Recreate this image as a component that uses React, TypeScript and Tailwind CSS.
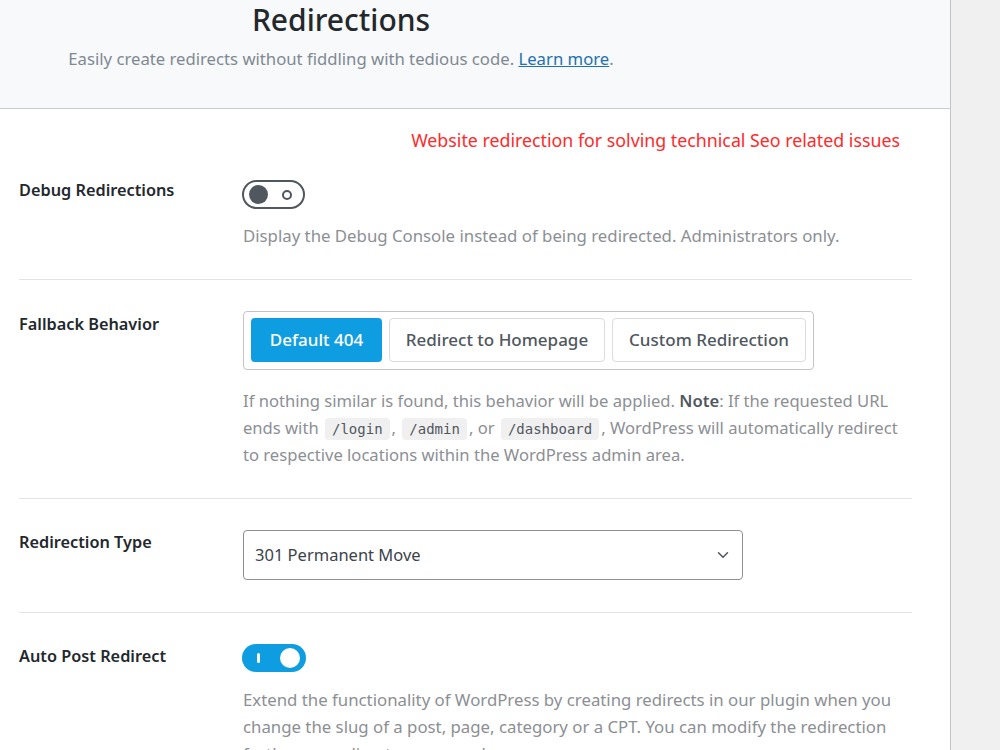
import { ChevronDown } from 'lucide-react';

function Toggle({ on }: { on: boolean }) {
  if (on) {
    return (
      <div className="-ml-[1px] flex h-[28px] w-[64px] items-center justify-between rounded-full bg-[#0f9de2] pl-[15px] pr-[6px]">
        <span className="h-[10px] w-[3px] rounded-sm bg-white" />
        <span className="h-[20px] w-[20px] rounded-full bg-white" />
      </div>
    );
  }
  return (
    <div className="-ml-[1px] flex h-[29px] w-[63px] items-center justify-between rounded-full border-2 border-[#50575e] pl-[5px] pr-[11px]">
      <span className="h-[19px] w-[19px] rounded-full bg-[#50575e]" />
      <span className="h-[10px] w-[10px] rounded-full border-2 border-[#50575e]" />
    </div>
  );
}

function Code({ children }: { children: string }) {
  return (
    <code className="mx-[2px] inline-block rounded-sm bg-[#f0f0f1] px-[7px] font-['DejaVu_Sans_Mono',monospace] text-[14px] leading-[22px] text-[#50575e]">
      {children}
    </code>
  );
}

function Row({ label, children, last, pt, pb }: { label: string; children: React.ReactNode; last?: boolean; pt?: string; pb?: string }) {
  return (
    <div className={`flex ${pt ?? 'pt-[32px]'} ${last ? '' : `border-b border-[#e2e4e7] ${pb ?? 'pb-[30px]'}`}`}>
      <div className="w-[224px] shrink-0 text-[16.3px] leading-6 font-semibold text-[#23282d]">{label}</div>
      <div className="flex-1">{children}</div>
    </div>
  );
}

export default function App() {
  const options = [
    { label: 'Default 404', w: 'w-[131px]' },
    { label: 'Redirect to Homepage', w: 'w-[216px]' },
    { label: 'Custom Redirection', w: 'w-[194px]' },
  ];

  return (
    <div className="flex min-h-[750px] font-['Noto_Sans',sans-serif]">
      <div className="w-[951px] shrink-0 border-r border-[#c3c4c7] bg-white">
        {/* Header */}
        <div className="h-[109px] w-full border-b border-[#c5ced6] bg-[#f8f9fa]">
          <div className="w-[682px] text-center">
            <h1 className="text-[30px] leading-[40px] font-medium text-[#23282d]">Redirections</h1>
            <p className="mt-[7px] text-[16.7px] leading-6 text-[#7e8993]">
              Easily create redirects without fiddling with tedious code.{' '}
              <a href="#" className="text-[#2271b1] underline">Learn more</a>.
            </p>
          </div>
        </div>

        <div className="w-[912px] pl-[19px]">
          <div className="pt-[19px] pr-[12px] text-right text-[17.8px] leading-6 text-[#ff2a2a]">
            Website redirection for solving technical Seo related issues
          </div>

          <div className="flex border-b border-[#e2e4e7] pt-[26px] pb-[30px]">
            <div className="w-[224px] shrink-0 text-[16.3px] leading-6 font-semibold text-[#23282d]">Debug Redirections</div>
            <div className="flex-1 pt-[2px]">
              <Toggle on={false} />
              <p className="mt-[13px] text-[16.8px] leading-[27px] text-[#8c8f94]">
                Display the Debug Console instead of being redirected. Administrators only.
              </p>
            </div>
          </div>

          <Row label="Fallback Behavior">
            <div className="-mt-[1px] inline-flex gap-[7px] rounded border border-[#c3c4c7] px-[7px] pt-[6px] pb-[7px]">
              {options.map((o, i) => (
                <button
                  key={o.label}
                  className={`h-[44px] rounded text-[17px] font-medium ${o.w} ${
                    i === 0
                      ? 'bg-[#0f9de2] text-white'
                      : 'border border-[#dcdcde] bg-white text-[#50575e]'
                  }`}
                >
                  {o.label}
                </button>
              ))}
            </div>
            <p className="mt-[17px] text-[16.6px] leading-[27px] text-[#8c8f94]">
              If nothing similar is found, this behavior will be applied.{' '}
              <strong className="font-semibold text-[#50575e]">Note</strong>: If the requested URL ends with{' '}
              <Code>/login</Code>, <Code>/admin</Code>, or <Code>/dashboard</Code>, WordPress will automatically
              redirect to respective locations within the WordPress admin area.
            </p>
          </Row>

          <Row label="Redirection Type" pt="pt-[31px]" pb="pb-[32px]">
            <div className="flex h-[50px] w-[500px] items-center justify-between rounded border border-[#8c8f94] pr-[10px] pl-[11px] text-[16.5px] text-[#3c434a]">
              <span>301 Permanent Move</span>
              <ChevronDown className="h-[18px] w-[18px] text-[#50575e]" strokeWidth={2} />
            </div>
          </Row>

          <Row label="Auto Post Redirect" pt="pt-[31px]" last>
            <Toggle on />
            <p className="mt-[14px] text-[16.8px] leading-[27px] text-[#8c8f94]">
              Extend the functionality of WordPress by creating redirects in our plugin when you change the slug of
              a post, page, category or a CPT. You can modify the redirection further according to your needs.
            </p>
          </Row>
        </div>
      </div>
      <div className="flex-1 bg-[#f0f0f1]" />
    </div>
  );
}
